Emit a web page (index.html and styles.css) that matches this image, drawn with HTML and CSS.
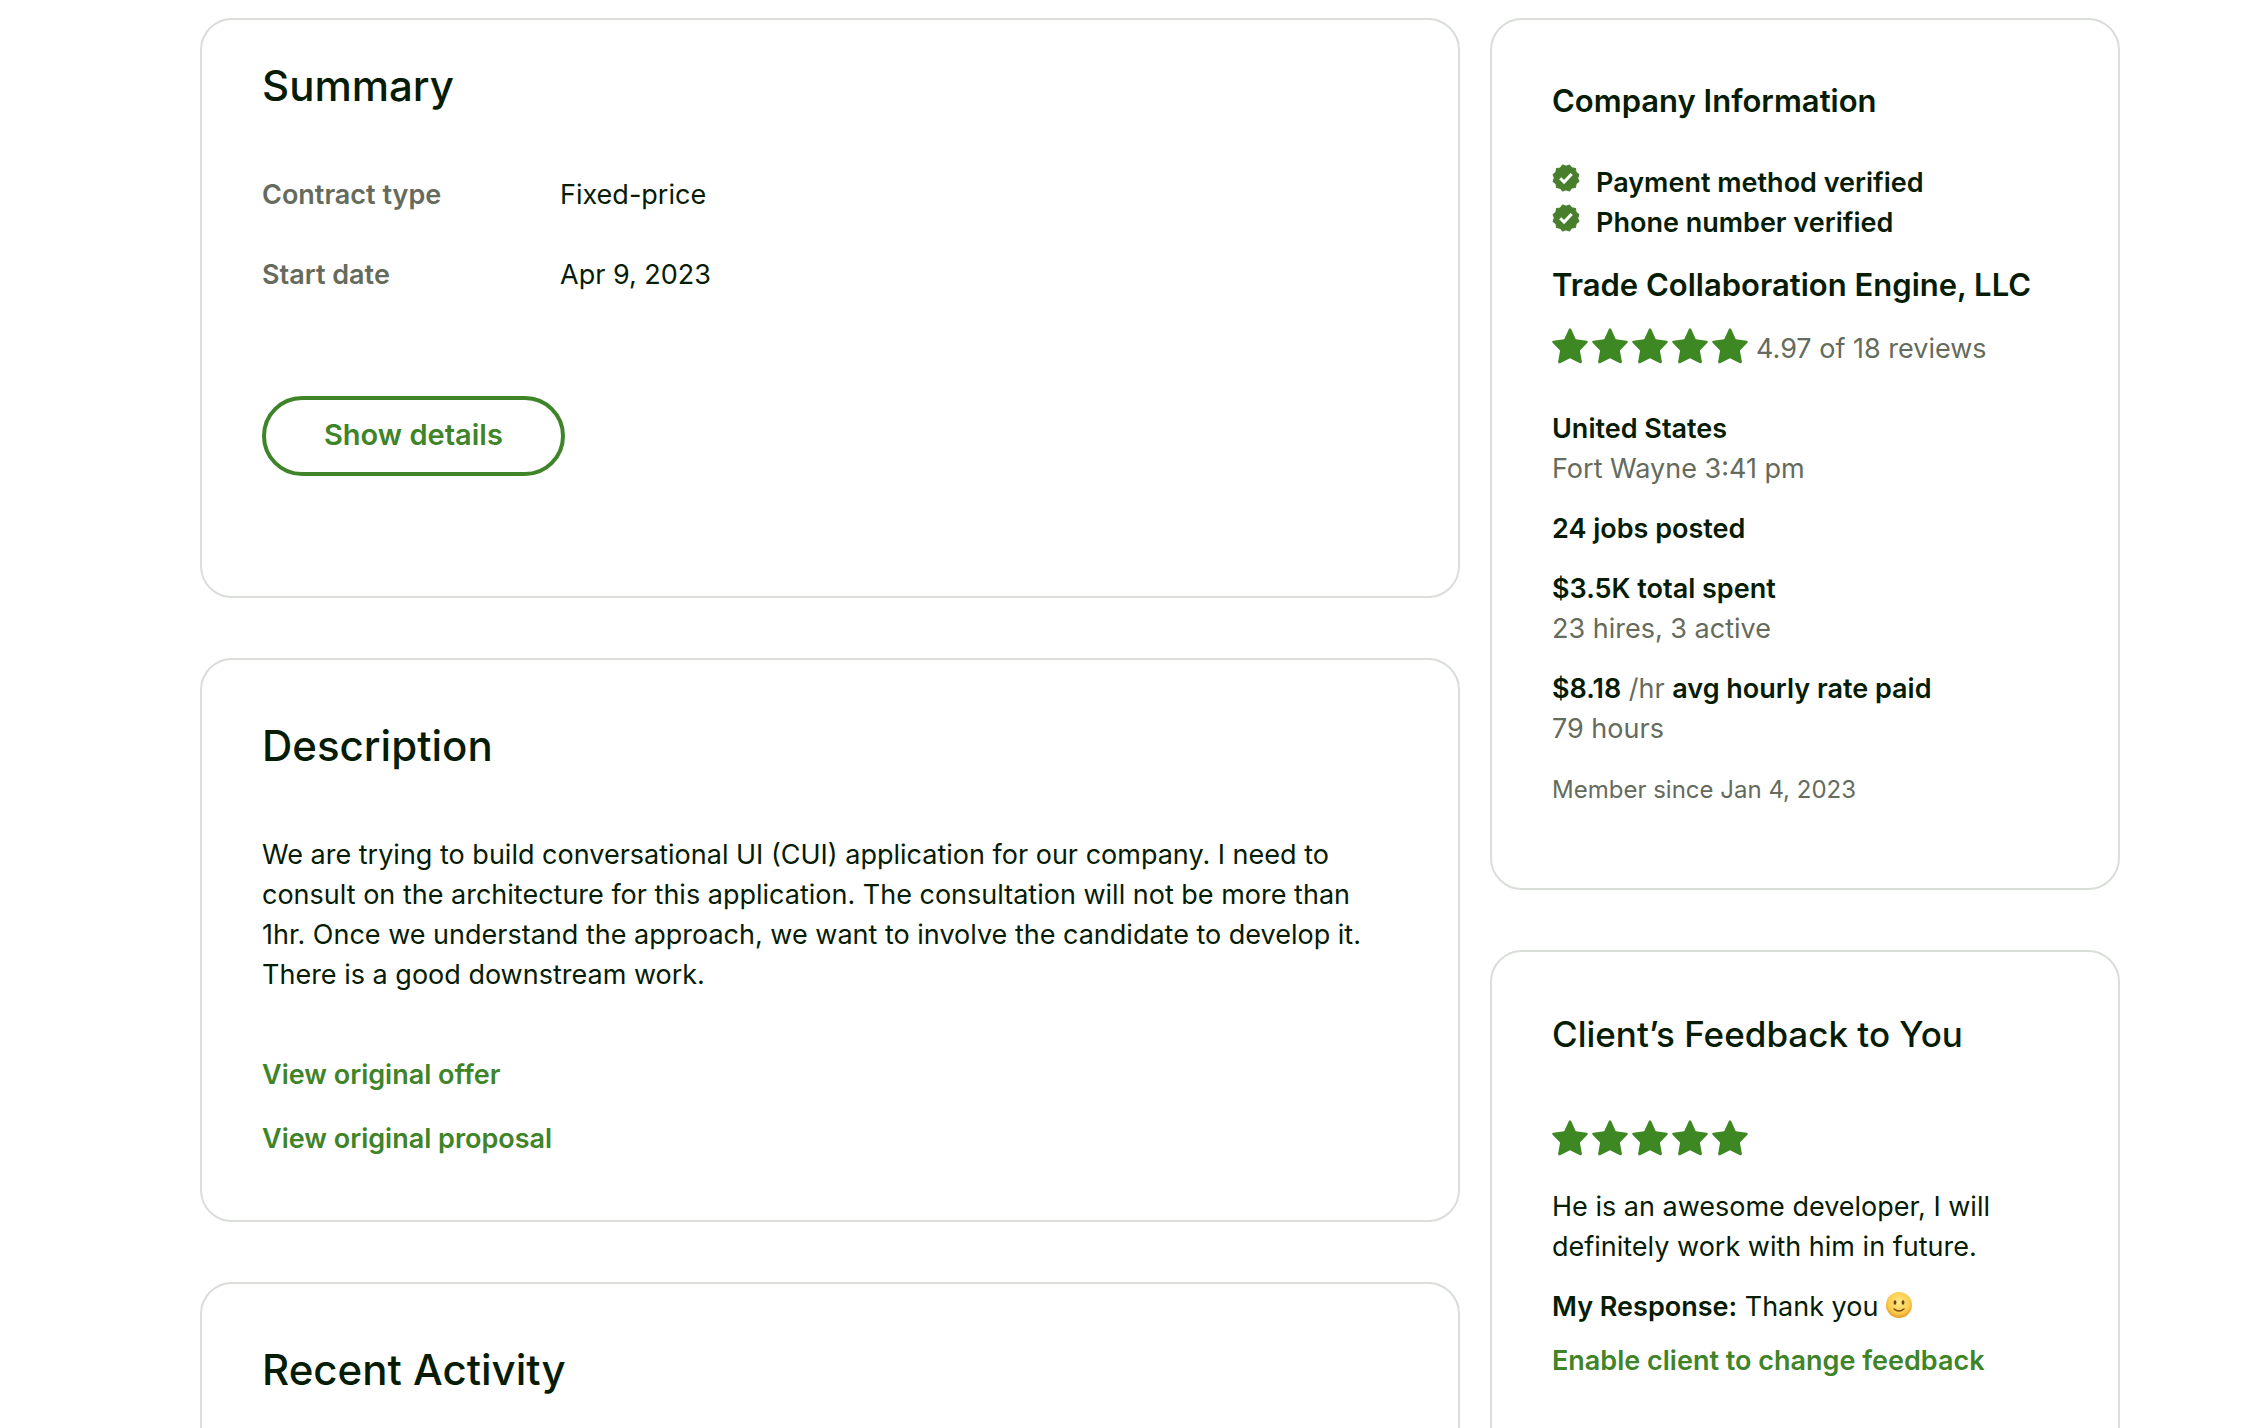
FILE: index.html
```html
<!DOCTYPE html>
<html lang="en">
<head>
    <meta charset="UTF-8">
    <meta name="viewport" content="width=device-width, initial-scale=1.0">
    <title>Contract Details</title>
    <link rel="stylesheet" href="styles.css">
</head>
<body>
    <svg class="sprite" aria-hidden="true">
        <symbol id="star" viewBox="0 0 36 36">
            <path d="M16.9 1.1q1.1-1.7 2.2 0l4.7 10.2 10.9 1.4q1.9.5.7 2L27.900 22.600l2 11.200q0 2-1.900 1.400L18 30.200l-10 5q-1.900.600-1.900-1.400l2-11.200L.600 14.700q-1.200-1.500.700-2l10.900-1.400z"/>
        </symbol>
        <symbol id="badge" viewBox="0 0 28 28">
            <path class="badge-shape" transform="rotate(15 14 14)" d="M14 .6l2.900 2.100 3.800-.3 1.500 3.400 3.400 1.500-.3 3.800L27.400 14l-2.100 2.900.3 3.800-3.400 1.500-1.500 3.400-3.800-.3L14 27.400l-2.900-2.100-3.800.3-1.500-3.400-3.400-1.500.3-3.800L.6 14l2.100-2.900-.3-3.800 3.400-1.500 1.500-3.400 3.800.3z"/>
            <path class="badge-check" d="M8.200 14.200l3.900 3.900 7.600-8.100"/>
        </symbol>
    </svg>

    <main class="page">
        <div class="column">
            <section class="card summary-card">
                <h2 class="card-title">Summary</h2>
                <dl class="summary-list">
                    <dt>Contract type</dt>
                    <dd>Fixed-price</dd>
                    <dt>Start date</dt>
                    <dd>Apr 9, 2023</dd>
                </dl>
                <button type="button" class="details-button">Show details</button>
            </section>

            <section class="card">
                <h2 class="card-title">Description</h2>
                <p class="description">We are trying to build conversational UI (CUI) application for our company. I need to consult on the architecture for this application. The consultation will not be more than 1hr. Once we understand the approach, we want to involve the candidate to develop it. There is a good downstream work.</p>
                <div class="link-list">
                    <a href="#" class="link">View original offer</a>
                    <a href="#" class="link">View original proposal</a>
                </div>
            </section>

            <section class="card">
                <h2 class="card-title">Recent Activity</h2>
            </section>
        </div>

        <aside class="column">
            <section class="card company-card">
                <h3 class="company-title">Company Information</h3>
                <ul class="verified-list">
                    <li><svg class="badge"><use href="#badge"/></svg>Payment method verified</li>
                    <li><svg class="badge"><use href="#badge"/></svg>Phone number verified</li>
                </ul>
                <h3 class="company-name">Trade Collaboration Engine, LLC</h3>
                <div class="rating">
                    <div class="stars">
                        <svg class="star"><use href="#star"/></svg>
                        <svg class="star"><use href="#star"/></svg>
                        <svg class="star"><use href="#star"/></svg>
                        <svg class="star"><use href="#star"/></svg>
                        <svg class="star"><use href="#star"/></svg>
                    </div>
                    <span class="muted">4.97 of 18 reviews</span>
                </div>
                <ul class="company-facts">
                    <li>
                        <strong>United States</strong>
                        <div class="muted">Fort Wayne 3:41 pm</div>
                    </li>
                    <li>
                        <strong>24 jobs posted</strong>
                    </li>
                    <li>
                        <strong>$3.5K total spent</strong>
                        <div class="muted">23 hires, 3 active</div>
                    </li>
                    <li>
                        <strong>$8.18</strong> <span class="muted">/hr</span> <strong>avg hourly rate paid</strong>
                        <div class="muted">79 hours</div>
                    </li>
                    <li class="muted member-since">Member since Jan 4, 2023</li>
                </ul>
            </section>

            <section class="card feedback-card">
                <h2 class="feedback-title">Client’s Feedback to You</h2>
                <div class="stars">
                    <svg class="star"><use href="#star"/></svg>
                    <svg class="star"><use href="#star"/></svg>
                    <svg class="star"><use href="#star"/></svg>
                    <svg class="star"><use href="#star"/></svg>
                    <svg class="star"><use href="#star"/></svg>
                </div>
                <p class="feedback-text">He is an awesome developer, I will definitely work with him in future.</p>
                <p class="feedback-response">
                    <strong>My Response:</strong> Thank you
                    <svg class="smiley" viewBox="0 0 26 26" role="img" aria-label="smile">
                        <defs>
                            <radialGradient id="face" cx="50%" cy="40%" r="60%">
                                <stop offset="0" stop-color="#ffe98a"/>
                                <stop offset="0.7" stop-color="#fbcb4a"/>
                                <stop offset="1" stop-color="#e29a2c"/>
                            </radialGradient>
                        </defs>
                        <circle cx="13" cy="13" r="13" fill="url(#face)"/>
                        <ellipse cx="9" cy="10.500" rx="1.400" ry="2.200" fill="#6b4210"/>
                        <ellipse cx="17" cy="10.500" rx="1.400" ry="2.200" fill="#6b4210"/>
                        <path d="M8 17q5 4 10 0" fill="none" stroke="#7a4a12" stroke-width="1.400" stroke-linecap="round"/>
                    </svg>
                </p>
                <a href="#" class="link">Enable client to change feedback</a>
            </section>
        </aside>
    </main>
</body>
</html>
```
FILE: styles.css
```css
* {
    box-sizing: border-box;
}
body {
    font-family: Inter, 'Helvetica Neue', 'Liberation Sans', sans-serif;
    font-size: 27px;
    line-height: 40px;
    margin: 0;
    background-color: #fff;
    color: #061c04;
}
h2, h3, p, ul, dl, dd {
    margin: 0;
    padding: 0;
    font-weight: 400;
}
h3, dt, strong {
    font-weight: 600;
}
h2 {
    font-weight: 500;
}
ul {
    list-style: none;
}
.sprite {
    display: none;
}
.page {
    display: grid;
    grid-template-columns: 2fr 1fr;
    gap: 30px;
    padding: 18px 130px 0 200px;
}
.column {
    display: flex;
    flex-direction: column;
    gap: 60px;
    min-width: 0;
}
.card {
    border: 2px solid #d9ded9;
    border-radius: 32px;
    padding: 60px 60px 61px;
}
.card-title {
    font-size: 42px;
    line-height: 52px;
    margin-bottom: 63px;
}
.summary-card {
    padding-top: 40px;
    padding-bottom: 120px;
}
.summary-list {
    display: grid;
    grid-template-columns: 298px 1fr;
    row-gap: 40px;
    margin-bottom: 101px;
}
.summary-list dt {
    color: #656b5c;
}
.details-button {
    font-family: inherit;
    font-size: 29px;
    font-weight: 600;
    line-height: 36px;
    padding: 17px 58px 19px;
    color: #3f8429;
    background-color: transparent;
    border: 4px solid #3f8429;
    border-radius: 40px;
    cursor: pointer;
    display: block;
}
.description {
    margin-bottom: 60px;
}
.link-list {
    display: flex;
    flex-direction: column;
    align-items: flex-start;
    gap: 24px;
}
.link {
    color: #3f8429;
    font-weight: 600;
    text-decoration: none;
}
.muted {
    color: #656b5c;
}
.company-card {
    padding-bottom: 77px;
}
.company-title {
    font-size: 31px;
    line-height: 42px;
    margin-bottom: 41px;
}
.verified-list {
    margin-bottom: 22px;
}
.verified-list li {
    display: flex;
    align-items: flex-start;
    gap: 16px;
    font-weight: 600;
}
.badge {
    width: 28px;
    height: 28px;
    margin-top: 1px;
}
.badge-shape {
    fill: #487f2c;
    stroke: #487f2c;
    stroke-width: 1;
    stroke-linejoin: round;
}
.badge-check {
    fill: none;
    stroke: #fff;
    stroke-width: 3;
}
.company-name {
    font-size: 31px;
    margin-bottom: 23px;
}
.rating {
    display: flex;
    gap: 8px;
    line-height: 42px;
    margin-bottom: 39px;
}
.stars {
    display: flex;
    gap: 4px;
}
.star {
    width: 36px;
    height: 36px;
    fill: #3e8824;
}
.company-facts {
    display: flex;
    flex-direction: column;
    gap: 20px;
}
.member-since {
    font-size: 24px;
    line-height: 42px;
}
.feedback-card {
    padding-bottom: 120px;
}
.feedback-title {
    font-size: 35px;
    line-height: 44px;
    margin-bottom: 64px;
}
.feedback-text {
    margin-top: 31px;
    margin-bottom: 20px;
}
.feedback-response {
    margin-bottom: 14px;
}
.smiley {
    width: 26px;
    height: 26px;
    vertical-align: -2px;
}
```
